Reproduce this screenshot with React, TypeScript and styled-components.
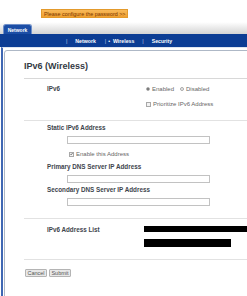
import styled, { createGlobalStyle } from "styled-components";

const GlobalStyle = createGlobalStyle`
  html, body {
    margin: 0;
    padding: 0;
    overflow: hidden;
    background: #ffffff;
  }
  body {
    font-family: "Liberation Sans", Arial, sans-serif;
  }
  * {
    box-sizing: border-box;
  }
`;

const Tick = () => (
  <svg width="4" height="4" viewBox="0 0 4 4">
    <path d="M0.5 2 L1.5 3.1 L3.5 0.7" fill="none" stroke="#444" strokeWidth="0.9" />
  </svg>
);

const App = () => {
  return (
    <Page>
      <GlobalStyle />
      <TopBar>
        <Banner>Please configure the password &gt;&gt;</Banner>
      </TopBar>
      <TabStrip>
        <Tab>Network</Tab>
      </TabStrip>
      <NavBar>
        <NavSep>|</NavSep>
        <NavLink>Network</NavLink>
        <NavSep>|</NavSep>
        <NavLink $active>
          <Bullet>•</Bullet>Wireless
        </NavLink>
        <NavSep>|</NavSep>
        <NavLink>Security</NavLink>
      </NavBar>
      <Frame>
        <Panel>
          <Title>IPv6 (Wireless)</Title>

          <Section $pt={6} $pb={12}>
            <Row>
              <Label>IPv6</Label>
              <Value>
                <Radio $checked />
                <OptText>Enabled</OptText>
                <Radio />
                <OptText>Disabled</OptText>
              </Value>
            </Row>
            <Row $mt={7}>
              <Label />
              <Value>
                <Check />
                <OptText>Prioritize IPv6 Address</OptText>
              </Value>
            </Row>
          </Section>

          <Section $border $pt={3} $pb={12}>
            <Label>Static IPv6 Address</Label>
            <Field $mt={4} />
            <CheckRow $mt={6}>
              <Check>
                <Tick />
              </Check>
              <OptText>Enable this Address</OptText>
            </CheckRow>
            <Label $mt={5}>Primary DNS Server IP Address</Label>
            <Field $mt={4} />
            <Label $mt={3}>Secondary DNS Server IP Address</Label>
            <Field $mt={4} />
          </Section>

          <Section $border $pt={7} $pb={12}>
            <ListRow>
              <ListLabel>IPv6 Address List</ListLabel>
              <Bars>
                <Redacted $w={110} />
                <Redacted $w={87} $mt={7} />
              </Bars>
            </ListRow>
          </Section>

          <Section $border $pt={9} $pb={30}>
            <Buttons>
              <Btn>Cancel</Btn>
              <Btn>Submit</Btn>
            </Buttons>
          </Section>
        </Panel>
      </Frame>
    </Page>
  );
};

export default App;

const Page = styled.div`
  width: 247px;
  overflow: hidden;
`;

const TopBar = styled.div`
  height: 22px;
  padding: 4px 0 0 41px;
`;

const Banner = styled.div`
  display: inline-block;
  height: 9px;
  width: 87px;
  line-height: 8px;
  padding-left: 2px;
  font-size: 5.4px;
  color: #7a3600;
  background: linear-gradient(#f8b95a, #f0a030);
  border: 1px solid #e39a2c;
  white-space: nowrap;
  overflow: hidden;
`;

const TabStrip = styled.div`
  height: 12px;
  padding: 2px 0 0 3px;
  display: flex;
  align-items: flex-end;
  background: linear-gradient(#ffffff, #d4d4d4);
`;

const Tab = styled.div`
  width: 29px;
  height: 10px;
  line-height: 10px;
  text-align: center;
  font-size: 5px;
  font-weight: 700;
  color: #ffffff;
  background: #1c4ea6;
  border-radius: 3px 3px 0 0;
  border: 1px solid #6f8fc8;
  border-bottom: none;
`;

const NavBar = styled.div`
  height: 13px;
  display: flex;
  align-items: center;
  padding-left: 66px;
  background: #0c3d94;
  color: #ffffff;
  font-size: 5.2px;
  font-weight: 700;
`;

const NavSep = styled.span`
  color: #c7d3ea;
  font-weight: 400;
  margin-right: 8px;
`;

const NavLink = styled.span<{ $active?: boolean }>`
  margin-right: ${(p) => (p.$active ? "8px" : "9px")};
  margin-left: ${(p) => (p.$active ? "-6px" : "0")};
`;

const Bullet = styled.span`
  margin-right: 3px;
  font-weight: 400;
`;

const Frame = styled.div`
  margin-left: 1px;
  padding: 2px 0 0 1px;
  border-left: 2px solid #3f67b3;
  border-top: 1px solid #dfe6f0;
`;

const Panel = styled.div`
  width: 260px;
  border: 1px solid #aeb8c6;
  border-radius: 3px;
  padding: 10px 0 0 19px;
  background: #ffffff;
`;

const Title = styled.div`
  font-size: 9px;
  line-height: 11px;
  font-weight: 700;
  color: #333a44;
  padding-bottom: 6px;
  border-bottom: 1px solid #d8d8d8;
`;

const Section = styled.div<{ $border?: boolean; $pt: number; $pb: number }>`
  border-top: ${(p) => (p.$border ? "1px solid #e2e2e2" : "none")};
  padding: ${(p) => `${p.$pt}px 0 ${p.$pb}px 23px`};
`;

const Row = styled.div<{ $mt?: number }>`
  display: flex;
  align-items: center;
  height: 8px;
  margin-top: ${(p) => p.$mt ?? 0}px;
`;

const Label = styled.div<{ $mt?: number }>`
  width: 99px;
  min-height: 8px;
  line-height: 8px;
  font-size: 6.3px;
  font-weight: 700;
  color: #40444c;
  white-space: nowrap;
  margin-top: ${(p) => p.$mt ?? 0}px;
`;

const Value = styled.div`
  display: flex;
  align-items: center;
`;

const Radio = styled.span<{ $checked?: boolean }>`
  width: 4px;
  height: 4px;
  border-radius: 50%;
  border: 1px solid #a8a8a8;
  background: ${(p) =>
    p.$checked ? "radial-gradient(#444 0 45%, #ddd 65%)" : "#f2f2f2"};
`;

const Check = styled.span`
  display: flex;
  align-items: center;
  justify-content: center;
  width: 5px;
  height: 5px;
  border: 1px solid #a8a8a8;
  background: #f2f2f2;
  overflow: visible;
`;

const OptText = styled.span`
  font-size: 6px;
  line-height: 8px;
  color: #666666;
  margin: 0 6px 0 2px;
  white-space: nowrap;
`;

const CheckRow = styled.div<{ $mt?: number }>`
  display: flex;
  align-items: center;
  height: 8px;
  padding-left: 22px;
  margin-top: ${(p) => p.$mt ?? 0}px;
`;

const Field = styled.input.attrs({ type: "text" })<{ $mt?: number }>`
  display: block;
  width: 143px;
  height: 8px;
  margin: ${(p) => p.$mt ?? 0}px 0 0 20px;
  padding: 0;
  border: 1px solid #c2c2c2;
  background: #ffffff;
`;

const ListRow = styled.div`
  display: flex;
  align-items: flex-start;
`;

const ListLabel = styled.div`
  width: 97px;
  line-height: 7px;
  font-size: 6.3px;
  font-weight: 700;
  color: #40444c;
  white-space: nowrap;
`;

const Bars = styled.div`
  display: flex;
  flex-direction: column;
`;

const Redacted = styled.div<{ $w: number; $mt?: number }>`
  width: ${(p) => p.$w}px;
  height: ${(p) => (p.$mt ? 8 : 6)}px;
  margin-top: ${(p) => p.$mt ?? 0}px;
  background: #000000;
`;

const Buttons = styled.div`
  display: flex;
  gap: 2px;
  margin-left: -22px;
`;

const Btn = styled.button`
  width: 22px;
  height: 8px;
  padding: 0;
  font-family: "Liberation Sans", Arial, sans-serif;
  font-size: 5.5px;
  line-height: 6px;
  color: #555555;
  background: #e8e8e8;
  border: 1px solid #b4b4b4;
  border-radius: 1px;
`;
